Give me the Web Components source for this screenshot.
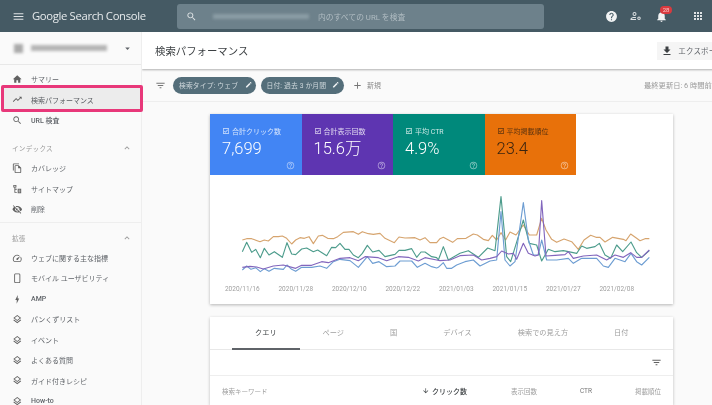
<!DOCTYPE html>
<html lang="ja">
<head>
<meta charset="utf-8">
<title>Search Console</title>
<style>
  html, body { margin: 0; padding: 0; background: #fafafa; }
  body { font-family: Roboto, "Noto Sans CJK JP", sans-serif; width: 712px; height: 405px; overflow: hidden; }
</style>
</head>
<body>
<gsc-app>
  <gsc-header slot="header"></gsc-header>
  <gsc-sidebar slot="side">
    <nav-item icon="home">サマリー</nav-item>
    <nav-item icon="trend" marked>検索パフォーマンス</nav-item>
    <nav-item icon="search" strong>URL 検査</nav-item>
    <nav-heading first>インデックス</nav-heading>
    <nav-item icon="copy">カバレッジ</nav-item>
    <nav-item icon="sitemap">サイトマップ</nav-item>
    <nav-item icon="hide">削除</nav-item>
    <nav-heading>拡張</nav-heading>
    <nav-item icon="speed">ウェブに関する主な指標</nav-item>
    <nav-item icon="phone">モバイル ユーザビリティ</nav-item>
    <nav-item icon="bolt" strong>AMP</nav-item>
    <nav-item icon="layers">パンくずリスト</nav-item>
    <nav-item icon="layers">イベント</nav-item>
    <nav-item icon="layers">よくある質問</nav-item>
    <nav-item icon="layers">ガイド付きレシピ</nav-item>
    <nav-item icon="layers" strong>How-to</nav-item>
  </gsc-sidebar>
  <perf-title></perf-title>
  <perf-filters></perf-filters>
  <perf-card>
    <metric-tile color="#4285f4" label="合計クリック数" value="7,699"></metric-tile>
    <metric-tile color="#5e35b1" label="合計表示回数" value="15.6万"></metric-tile>
    <metric-tile color="#00897b" label="平均 CTR" value="4.9%"></metric-tile>
    <metric-tile color="#e8710a" label="平均掲載順位" value="23.4" dark></metric-tile>
  </perf-card>
  <query-table></query-table>
</gsc-app>

<script>
const PATHS = {
  menu: "M3 18h18v-2H3v2zm0-5h18v-2H3v2zm0-7v2h18V6H3z",
  home: "M10 20v-6h4v6h5v-8h3L12 3 2 12h3v8z",
  trend: "M16 6l2.29 2.29-4.88 4.88-4-4L2 16.59 3.41 18l6-6 4 4 6.3-6.29L22 12V6z",
  search: "M15.5 14h-.79l-.28-.27C15.41 12.59 16 11.11 16 9.5 16 5.91 13.09 3 9.5 3S3 5.91 3 9.5 5.91 16 9.5 16c1.61 0 3.09-.59 4.23-1.57l.27.28v.79l5 4.99L20.49 19l-4.99-5zm-6 0C7.01 14 5 11.99 5 9.5S7.01 5 9.5 5 14 7.01 14 9.5 11.99 14 9.5 14z",
  copy: "M16 1H4c-1.1 0-2 .9-2 2v14h2V3h12V1zm-1 4H8c-1.1 0-1.99.9-1.99 2L6 21c0 1.1.89 2 1.99 2H19c1.1 0 2-.9 2-2V11l-6-6zM8 21V7h6v5h5v9H8z",
  sitemap: "M3 2h7v6H7.5v3H11v2H7.5v5H11v2H5.5V8H3V2zm2 2v2h3V4H5zm8 7h8v10h-8V11zm2 2v2h4v-2h-4zm0 4v2h4v-2h-4z",
  hide: "M12 7c2.76 0 5 2.24 5 5 0 .65-.13 1.26-.36 1.83l2.92 2.92c1.51-1.26 2.7-2.89 3.43-4.75-1.73-4.39-6-7.5-11-7.5-1.4 0-2.74.25-3.98.7l2.16 2.16C10.74 7.13 11.35 7 12 7zM2 4.27l2.28 2.28.46.46C3.08 8.3 1.78 10.02 1 12c1.73 4.39 6 7.5 11 7.5 1.55 0 3.03-.3 4.38-.84l.42.42L19.73 22 21 20.73 3.27 3 2 4.27zM7.53 9.8l1.55 1.55c-.05.21-.08.43-.08.65 0 1.66 1.34 3 3 3 .22 0 .44-.03.65-.08l1.55 1.55c-.67.33-1.41.53-2.2.53-2.76 0-5-2.24-5-5 0-.79.2-1.53.53-2.2zm4.31-.78l3.15 3.15.02-.16c0-1.66-1.34-3-3-3l-.17.01z",
  speed: "M20.38 8.57l-1.23 1.85a8 8 0 0 1-.22 7.58H5.07A8 8 0 0 1 15.58 6.85l1.85-1.23A10 10 0 0 0 3.35 19a2 2 0 0 0 1.72 1h13.85a2 2 0 0 0 1.74-1 10 10 0 0 0-.27-10.44zM10.59 15.41a2 2 0 0 0 2.83 0l5.66-8.49-8.49 5.66a2 2 0 0 0 0 2.83z",
  phone: "M16 1H8C6.34 1 5 2.34 5 4v16c0 1.66 1.34 3 3 3h8c1.66 0 3-1.34 3-3V4c0-1.66-1.34-3-3-3zm1 19c0 .55-.45 1-1 1H8c-.55 0-1-.45-1-1V4c0-.55.45-1 1-1h8c.55 0 1 .45 1 1v16z",
  bolt: "M13 2L7.5 13.5H11L10.5 22 16.5 10.5H13z",
  layers: "M11.99 18.54l-7.37-5.73L3 14.07l9 7 9-7-1.63-1.27zM12 16l7.36-5.73L21 9l-9-7-9 7 1.63 1.27L12 16zm0-11.47L17.74 9 12 13.47 6.26 9 12 4.53z",
  less: "M12 8l-6 6 1.41 1.41L12 10.83l4.59 4.58L18 14z",
  drop: "M7 10l5 5 5-5z",
  filter: "M10 18h4v-2h-4v2zM3 6v2h18V6H3zm3 7h12v-2H6v2z",
  edit: "M3 17.25V21h3.75L17.81 9.94l-3.75-3.75L3 17.25zM20.71 7.04c.39-.39.39-1.02 0-1.41l-2.34-2.34c-.39-.39-1.02-.39-1.41 0l-1.83 1.83 3.75 3.75 1.83-1.83z",
  add: "M19 13h-6v6h-2v-6H5v-2h6V5h2v6h6v2z",
  download: "M19 9h-4V3H9v6H5l7 7 7-7zM5 18v2h14v-2H5z",
  down: "M20 12l-1.41-1.41L13 16.17V4h-2v12.17l-5.58-5.59L4 12l8 8 8-8z",
  check: "M19 3H5c-1.11 0-2 .9-2 2v14c0 1.1.89 2 2 2h14c1.11 0 2-.9 2-2V5c0-1.1-.89-2-2-2zm0 16H5V5h14v14zM17.99 9l-1.41-1.42-6.59 6.59-2.58-2.56-1.42 1.41 4 3.99z",
  help: "M12 2C6.48 2 2 6.48 2 12s4.48 10 10 10 10-4.48 10-10S17.52 2 12 2zm1 17h-2v-2h2v2zm2.07-7.75l-.9.92C13.45 12.9 13 13.5 13 15h-2v-.5c0-1.1.45-2.1 1.17-2.83l1.24-1.26c.37-.36.59-.86.59-1.41 0-1.1-.9-2-2-2s-2 .9-2 2H8c0-2.21 1.79-4 4-4s4 1.79 4 4c0 .88-.36 1.68-.93 2.25z",
  helpline: "M11 18h2v-2h-2v2zm1-16C6.48 2 2 6.48 2 12s4.48 10 10 10 10-4.48 10-10S17.52 2 12 2zm0 18c-4.41 0-8-3.59-8-8s3.59-8 8-8 8 3.59 8 8-3.59 8-8 8zm0-14c-2.21 0-4 1.79-4 4h2c0-1.1.9-2 2-2s2 .9 2 2c0 2-3 1.75-3 5h2c0-2.25 3-2.5 3-5 0-2.21-1.79-4-4-4z",
  people: "M9 4a4 4 0 1 1 0 8 4 4 0 0 1 0-8zm0 2a2 2 0 1 0 0 4 2 2 0 0 0 0-4zM1 20v-2c0-2.7 5.3-4 8-4 .9 0 2 .15 3 .42v2.1c-1-.34-2.1-.52-3-.52-2.6 0-6 1.2-6 2v0h9v2H1zM18 13a3.5 3.5 0 1 1 0 7 3.5 3.5 0 0 1 0-7zm0 2a1.5 1.5 0 1 0 0 3 1.5 1.5 0 0 0 0-3z",
  bell: "M12 22c1.1 0 2-.9 2-2h-4c0 1.1.89 2 2 2zm6-6v-5c0-3.07-1.64-5.64-4.5-6.32V4c0-.83-.67-1.5-1.5-1.5s-1.5.67-1.5 1.5v.68C7.63 5.36 6 7.92 6 11v5l-2 2v1h16v-1l-2-2z",
  apps: "M4 8h4V4H4v4zm6 12h4v-4h-4v4zm-6 0h4v-4H4v4zm0-6h4v-4H4v4zm6 0h4v-4h-4v4zm6-10v4h4V4h-4zm-6 4h4V4h-4v4zm6 6h4v-4h-4v4zm0 6h4v-4h-4v4z"
};

function icon(name, size, color) {
  return `<svg width="${size}" height="${size}" viewBox="0 0 24 24" fill="${color || "currentColor"}" style="display:block;flex:none"><path d="${PATHS[name]}"/></svg>`;
}

class BaseElement extends HTMLElement {
  constructor() {
    super();
    this.attachShadow({mode: "open"});
  }
  connectedCallback() {
    this.shadowRoot.innerHTML = this.render();
  }
}

class GscApp extends BaseElement {
  render() {
    return `
    <style>
      :host { display: flex; flex-direction: column; width: 712px; height: 405px; overflow: hidden; filter: blur(.5px); }
      .body { flex: 1; display: flex; min-height: 0; }
      .main { flex: 1; min-width: 0; overflow: hidden; background: #fafafa; }
    </style>
    <slot name="header"></slot>
    <div class="body">
      <slot name="side"></slot>
      <div class="main"><slot></slot></div>
    </div>`;
  }
}

class GscHeader extends BaseElement {
  render() {
    return `
    <style>
      :host { display: flex; align-items: center; height: 32px; background: #455a64; color: #fff; box-sizing: border-box; padding-left: 12px; flex: none; }
      .logo { width: 145px; margin-left: 7px; font: 400 11.3px/1 "Open Sans", Roboto, sans-serif; color: #e6eaec; letter-spacing: -.35px; white-space: nowrap; }
      .search { width: 367px; height: 25px; background: #6d818b; border-radius: 3px; display: flex; align-items: center; padding-left: 9px; box-sizing: border-box; color: #e3e7e9; }
      .mask { width: 96px; height: 5px; margin-left: 16px; background: #8b9da5; filter: blur(1.5px); }
      .hint { margin-left: 9px; font-size: 7.8px; color: #b0bcc2; white-space: nowrap; }
      .acts { display: flex; align-items: center; margin-left: 61px; }
      .bell { position: relative; margin-left: 13px; margin-right: 24px; }
      .badge { position: absolute; top: -4px; left: 5px; width: 12px; height: 8px; border-radius: 4px; background: #d93a3f; color: #f6c9c9; font-size: 6px; line-height: 8px; text-align: center; }
    </style>
    ${icon("menu", 13, "#dfe3e5")}
    <div class="logo">Google Search Console</div>
    <div class="search">
      ${icon("search", 11)}
      <div class="mask"></div>
      <span class="hint">内のすべての URL を検査</span>
    </div>
    <div class="acts">
      ${icon("help", 13, "#f1f3f4")}
      <div style="margin-left:12px">${icon("people", 12, "#dfe3e5")}</div>
      <div class="bell">${icon("bell", 13, "#f1f3f4")}<span class="badge">28</span></div>
      ${icon("apps", 12, "#dfe3e5")}
    </div>`;
  }
}

class GscSidebar extends BaseElement {
  render() {
    return `
    <style>
      :host { display: block; position: relative; z-index: 2; width: 142px; flex: none; background: #fafafa; border-right: 1px solid #eee; box-sizing: border-box; }
      .prop { height: 32px; display: flex; align-items: center; padding-left: 14px; border-bottom: 1px solid #e8e8e8; box-sizing: content-box; color: #5f6368; }
      .fav { width: 9px; height: 9px; background: #aaa; filter: blur(1.5px); }
      .name { width: 76px; height: 6px; margin-left: 8px; background: #b5b5b5; filter: blur(1.5px); }
      .drop { margin-left: 15px; }
      .list { padding-top: 4px; }
    </style>
    <div class="prop">
      <div class="fav"></div><div class="name"></div>
      <div class="drop">${icon("drop", 11)}</div>
    </div>
    <div class="list"><slot></slot></div>`;
  }
}

class NavItem extends BaseElement {
  render() {
    const strong = this.hasAttribute("strong");
    return `
    <style>
      :host { display: flex; align-items: center; height: 20.45px; padding-left: 12px; position: relative; font-size: 7px; color: #5f6368; font-weight: ${strong ? 500 : 400}; white-space: nowrap; }
      .gap { width: 8.5px; flex: none; }
      .mark { position: absolute; left: 1px; right: -2px; top: -4px; bottom: -2.5px; box-sizing: border-box; border: 3px solid #e8387a; border-radius: 2px; background: rgba(0,0,0,.055); }
    </style>
    ${this.hasAttribute("marked") ? '<div class="mark"></div>' : ""}
    ${icon(this.getAttribute("icon"), 10.5, "#616161")}
    <div class="gap"></div>
    <slot></slot>`;
  }
}

class NavHeading extends BaseElement {
  render() {
    const first = this.hasAttribute("first");
    return `
    <style>
      :host { display: flex; align-items: center; justify-content: space-between; height: 20.35px; padding: 0 9px 0 12px; font-size: 6.6px; letter-spacing: .04em; color: #9a9a9a;
        margin-top: ${first ? 7.5 : 3}px; ${first ? "" : "border-top: 1px solid #eee; padding-top: 4px; box-sizing: content-box; height: 20.35px;"} }
    </style>
    <slot></slot>${icon("less", 10, "#9a9a9a")}`;
  }
}

class PerfTitle extends BaseElement {
  render() {
    return `
    <style>
      :host { display: flex; align-items: center; justify-content: space-between; height: 37px; padding-left: 13px; margin-right: -18px; background: #fff; box-shadow: 0 1px 2px rgba(0,0,0,.3); position: relative; z-index: 1; }
      h1 { margin: 0; font-size: 10.4px; font-weight: 400; color: #3c4043; white-space: nowrap; }
      .btn { display: flex; align-items: center; height: 18px; padding: 0 6px 0 4px; background: #f5f5f5; color: #5f6368; font-size: 7.5px; white-space: nowrap; }
      .btn span { margin-left: 5px; letter-spacing: .02em; }
    </style>
    <h1>検索パフォーマンス</h1>
    <div class="btn">${icon("download", 12, "#3c4043")}<span>エクスポート</span></div>`;
  }
}

class PerfFilters extends BaseElement {
  render() {
    const chip = t => `<div class="chip"><span>${t}</span>${icon("edit", 7.5, "#eceff1")}</div>`;
    return `
    <style>
      :host { display: flex; align-items: center; height: 33px; padding-left: 13px; border-bottom: 1px solid #eee; box-sizing: border-box; margin-right: -18px; position: relative; color: #757575; font-size: 7px; white-space: nowrap; }
      .chip { display: flex; align-items: center; justify-content: space-between; width: 83px; height: 17px; box-sizing: border-box; padding: 0 4px 0 6px; margin-right: 4.5px; border-radius: 9px; background: #546e7a; color: #cfd8dc; font-size: 6.8px; letter-spacing: .02em; }
      .first { margin-left: 7px; }
      .new { display: flex; align-items: center; margin-left: 4px; }
      .new span { margin-left: 4px; color: #8a8a8a; }
      .upd { margin-left: auto; color: #9a9a9a; width: 86px; font-size: 7.3px; }
    </style>
    ${icon("filter", 11, "#757575")}
    <div class="first"></div>
    ${chip("検索タイプ: ウェブ")}
    ${chip("日付: 過去 3 か月間")}
    <div class="new">${icon("add", 11, "#757575")}<span>新規</span></div>
    <div class="upd">最終更新日: 6 時間前</div>`;
  }
}

class MetricTile extends BaseElement {
  render() {
    const dark = this.hasAttribute("dark");
    const fg = dark ? "#3a2410" : "#fff";
    return `
    <style>
      :host { display: flex; flex-direction: column; box-sizing: border-box; width: 91.5px; height: 61px; padding: 12px 7px 5px 12px; background: ${this.getAttribute("color")}; color: ${fg}; }
      .top { display: flex; align-items: center; font-size: 7px; opacity: .8; white-space: nowrap; }
      .top span { margin-left: 2px; }
      .val { font-size: 16.5px; line-height: 20px; margin-top: 3px; font-weight: 300; }
      .help { margin-top: auto; align-self: flex-end; opacity: .55; }
    </style>
    <div class="top">${icon("check", 8)}<span>${this.getAttribute("label")}</span></div>
    <div class="val">${this.getAttribute("value")}</div>
    <div class="help">${icon("helpline", 9, "#fff")}</div>`;
  }
}

// chart points read off the reference at 3x, second halves are offset by 705
const SERIES = [
  ["#d6a46e",
    "112,180 125,176 140,176 165,185 178,180 190,183 205,170 220,170 232,168 245,175 260,192 272,180 285,173 298,175 312,170 325,191 340,168 352,166 368,175 385,176 398,170 415,157 445,155 460,163 472,155 490,161 505,163 525,160 540,175 568,188 582,171 600,174 630,173 645,180 660,173 675,188 695,188",
    "0,176 10,172 38,187 52,176 78,175 100,162 112,165 130,178 145,182 157,166 170,180 183,158 197,180 210,156 228,165 250,135 268,165 290,165 305,115 318,150 335,178 350,187 372,177 395,185 415,208 432,180 452,166 468,172 480,172 495,186 518,172 550,178 558,182 572,162 590,175 600,182 615,176 628,176"],
  ["#4d9c8c",
    "112,215 125,187 140,217 152,208 166,233 178,205 192,225 208,215 232,232 246,188 260,222 272,224 290,207 305,204 325,215 338,210 365,227 380,202 392,203 405,190 420,208 432,208 445,225 460,233 472,220 487,196 503,216 522,211 540,230 570,223 582,211 600,211 620,206 635,232 648,216 660,216 680,230 695,233",
    "-5,240 10,200 25,240 60,220 85,212 115,232 143,204 165,212 183,50 200,230 212,245 235,170 250,120 268,190 290,195 305,243 325,208 345,215 370,212 385,215 410,220 425,198 440,205 465,200 478,190 495,225 512,235 530,195 548,215 573,186 590,218 605,232 628,212"],
  ["#6d9dd2",
    "112,270 125,258 138,268 152,263 166,275 178,266 192,274 208,265 235,268 246,255 260,268 272,274 290,262 320,262 345,258 365,265 385,245 405,238 435,242 460,262 487,230 503,250 522,245 545,260 570,258 585,243 620,243 637,262 660,250 680,260 695,264",
    "-5,262 10,248 20,265 35,265 50,255 75,245 100,240 120,258 150,243 170,240 183,95 195,240 210,258 225,245 250,68 265,180 280,225 295,225 305,180 320,240 350,240 385,235 400,250 425,235 470,235 490,258 505,262 525,235 555,245 573,220 590,245 605,255 628,232"],
  ["#8266bd",
    "112,262 135,259 155,261 175,267 205,258 235,255 272,265 290,256 320,256 350,245 370,248 405,235 435,233 460,242 480,230 520,233 545,242 580,230 610,232 640,243 660,233 695,240",
    "0,242 30,240 60,227 100,225 125,240 150,235 170,230 185,213 205,222 220,220 230,238 250,190 265,220 285,228 295,225 305,62 318,228 345,226 375,224 385,215 400,235 430,228 470,225 500,240 525,225 550,232 572,218 590,232 605,232 628,210"]
];

class PerfCard extends BaseElement {
  render() {
    const lines = SERIES.map(([color, a, b]) => {
      const shifted = b.split(" ").map(p => {
        const [x, y] = p.split(",");
        return (+x + 705) + "," + y;
      }).join(" ");
      return `<polyline fill="none" stroke="${color}" stroke-width="3.4" stroke-linejoin="round" points="${a} ${shifted}"/>`;
    }).join("");
    const dates = ["2020/11/16", "2020/11/28", "2020/12/10", "2020/12/22", "2021/01/03", "2021/01/15", "2021/01/27", "2021/02/08"];
    return `
    <style>
      :host { display: block; width: 463px; margin: 12px 0 13px 68px; background: #fff; box-shadow: 0 1px 3px rgba(0,0,0,.28); }
      .tiles { display: flex; }
      svg { display: block; }
      .dates { display: flex; padding: 1px 0 9px 5.5px; height: 12px; align-items: center; }
      .dates span { width: 53.5px; text-align: center; font-size: 6.5px; color: #9e9e9e; }
    </style>
    <div class="tiles"><slot></slot></div>
    <svg width="463" height="107" viewBox="15 -15 1389 321">${lines}</svg>
    <div class="dates">${dates.map(d => `<span>${d}</span>`).join("")}</div>`;
  }
}

class QueryTable extends BaseElement {
  render() {
    const tabs = ["クエリ", "ページ", "国", "デバイス", "検索での見え方", "日付"];
    return `
    <style>
      :host { display: block; width: 463px; margin-left: 68px; background: #fff; box-shadow: 0 1px 3px rgba(0,0,0,.25); color: #9e9e9e; font-size: 7.2px; }
      .tabs { display: flex; height: 32px; padding-left: 22px; border-bottom: 1px solid #e8e8e8; }
      .tab { display: flex; align-items: center; padding: 0 23px 2px; white-space: nowrap; box-sizing: border-box; border-bottom: 2px solid transparent; margin-bottom: -1px; }
      .on { color: #3c4043; border-bottom-color: #5f6368; }
      .tools { display: flex; align-items: center; justify-content: flex-end; height: 25px; padding-right: 11px; border-bottom: 1px solid #eee; }
      .head { display: grid; grid-template-columns: 1fr 60px 70px 55px 69px; align-items: center; height: 29px; padding: 0 12px; font-size: 6.5px; }
      .head div { text-align: right; white-space: nowrap; }
      .head div:first-child { text-align: left; }
      .head .sort { display: flex; align-items: center; justify-content: flex-end; color: #3c4043; font-weight: 500; font-size: 7px; }
      .sort span { margin-left: 3px; }
      .dim { color: #757575; }
    </style>
    <div class="tabs">${tabs.map((t, i) => `<div class="tab${i ? "" : " on"}">${t}</div>`).join("")}</div>
    <div class="tools">${icon("filter", 11, "#616161")}</div>
    <div class="head">
      <div>検索キーワード</div>
      <div class="sort">${icon("down", 7.5, "#3c4043")}<span>クリック数</span></div>
      <div>表示回数</div>
      <div class="dim">CTR</div>
      <div>掲載順位</div>
    </div>`;
  }
}

customElements.define("gsc-app", GscApp);
customElements.define("gsc-header", GscHeader);
customElements.define("gsc-sidebar", GscSidebar);
customElements.define("nav-item", NavItem);
customElements.define("nav-heading", NavHeading);
customElements.define("perf-title", PerfTitle);
customElements.define("perf-filters", PerfFilters);
customElements.define("metric-tile", MetricTile);
customElements.define("perf-card", PerfCard);
customElements.define("query-table", QueryTable);
</script>
</body>
</html>
